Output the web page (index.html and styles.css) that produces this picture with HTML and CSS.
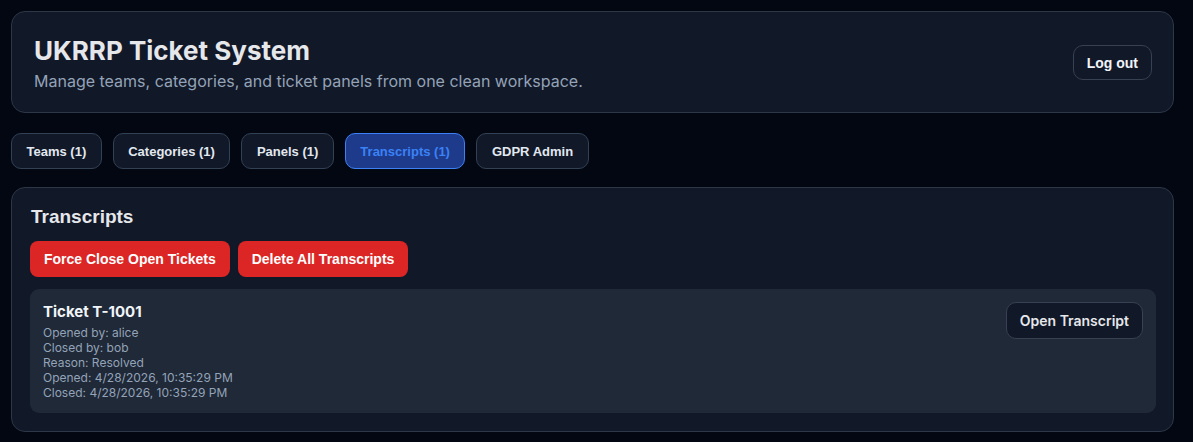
FILE: index.html
```html
<!DOCTYPE html>
<html lang="en">
<head>
    <meta charset="UTF-8">
    <meta name="viewport" content="width=device-width, initial-scale=1.0">
    <title>UKRRP Ticket System</title>
    <link rel="stylesheet" href="styles.css">
</head>
<body>
    <div class="container">
        <div class="header">
            <div>
                <h1>UKRRP Ticket System</h1>
                <p>Manage teams, categories, and ticket panels from one clean workspace.</p>
            </div>
            <button class="btn btn-ghost">Log out</button>
        </div>

        <!-- Tabs -->
        <div class="tabs">
            <button class="tab">Teams (1)</button>
            <button class="tab">Categories (1)</button>
            <button class="tab">Panels (1)</button>
            <button class="tab active">Transcripts (1)</button>
            <button class="tab">GDPR Admin</button>
        </div>

        <!-- Transcripts -->
        <div class="card">
            <h2>Transcripts</h2>
            <div class="actions">
                <button class="btn btn-danger">Force Close Open Tickets</button>
                <button class="btn btn-danger">Delete All Transcripts</button>
            </div>

            <div class="ticket">
                <div class="ticket-info">
                    <div class="ticket-name">Ticket T-1001</div>
                    <div class="ticket-details">
                        <div>Opened by: alice</div>
                        <div>Closed by: bob</div>
                        <div>Reason: Resolved</div>
                        <div>Opened: 4/28/2026, 10:35:29 PM</div>
                        <div>Closed: 4/28/2026, 10:35:29 PM</div>
                    </div>
                </div>
                <button class="btn btn-open">Open Transcript</button>
            </div>
        </div>
    </div>
</body>
</html>
```

FILE: styles.css
```css
* {
    margin: 0;
    padding: 0;
    box-sizing: border-box;
}

body {
    font-family: Inter, 'Liberation Sans', sans-serif;
    background: #030712;
    color: #e5e7eb;
    padding: 11px 19px 11px 11px;
}

.container {
    max-width: 1163px;
}

.header {
    display: flex;
    justify-content: space-between;
    align-items: center;
    background: #111827;
    border: 1px solid #2d3748;
    border-radius: 14px;
    padding: 22px 21px 21px 22px;
    margin-bottom: 20px;
}

.header h1 {
    font-size: 26px;
    font-weight: 700;
    color: #e5e7eb;
    line-height: 34px;
}

.header p {
    font-size: 16px;
    color: #94a3b8;
    margin-top: 3px;
}

.btn {
    font-family: 'Liberation Sans', Arial, sans-serif;
    font-weight: 700;
    font-size: 14px;
    border: none;
    border-radius: 8px;
    cursor: pointer;
    height: 36px;
    padding: 0 14px;
}

.btn-ghost {
    background: #111827;
    color: #f1f5f9;
    border: 1px solid #374151;
    border-radius: 10px;
    height: 35px;
    padding: 0 13px;
}

.tabs {
    display: flex;
    gap: 11px;
    margin-bottom: 18px;
}

.tab {
    font-family: 'Liberation Sans', Arial, sans-serif;
    font-weight: 700;
    font-size: 13px;
    height: 36px;
    padding: 0 14.5px;
    background: #111827;
    color: #e2e8f0;
    border: 1px solid #334155;
    border-radius: 10px;
    cursor: pointer;
}

.tab.active {
    background: #1e3a8a;
    border-color: #3b82f6;
    color: #3b82f6;
}

.card {
    background: #111827;
    border: 1px solid #2d3748;
    border-radius: 14px;
    padding: 17px 17px 18px 18px;
}

.card h2 {
    font-family: 'Liberation Sans', Arial, sans-serif;
    font-size: 19px;
    font-weight: 700;
    color: #e5e7eb;
    line-height: 24px;
    margin: 0 0 12px 1px;
}

.actions {
    display: flex;
    gap: 8px;
    margin-bottom: 12px;
}

.btn-danger {
    background: #dc2626;
    color: white;
}

.ticket {
    display: flex;
    justify-content: space-between;
    align-items: flex-start;
    background: #1f2937;
    border-radius: 9px;
    padding: 13px 13px 13px 13px;
}

.ticket-name {
    font-size: 15px;
    font-weight: 700;
    color: #f1f5f9;
    line-height: 20px;
    margin-bottom: 3px;
}

.ticket-details {
    font-size: 12px;
    line-height: 15px;
    color: #94a3b8;
}

.btn-open {
    font-family: Inter, sans-serif;
    font-weight: 600;
    background: #111827;
    color: #e5e7eb;
    border: 1px solid #374151;
    border-radius: 10px;
    padding: 0 13px;
    height: 37px;
}
```
